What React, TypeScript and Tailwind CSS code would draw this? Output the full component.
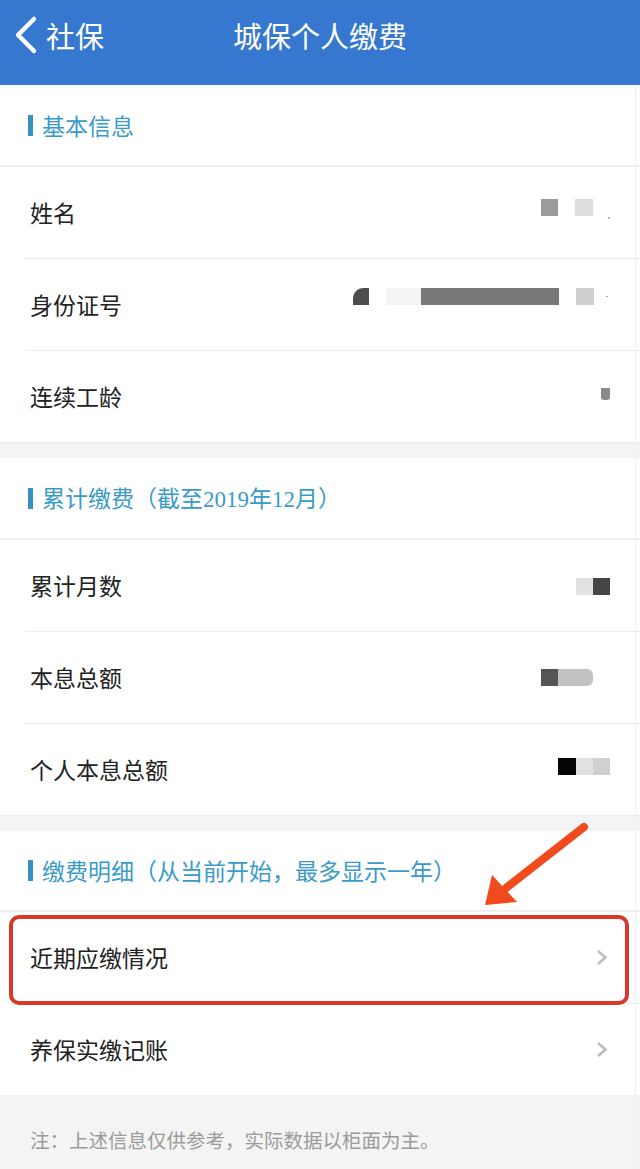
import React from "react";

const cjk = "font-['Noto_Sans_CJK_SC',sans-serif]";

type Block = { w: number; c: string; gap?: number; cls?: string };

const Mask = ({ blocks, className = "" }: { blocks: Block[]; className?: string }) => (
  <div className={`flex items-center ${className}`}>
    {blocks.map((b, i) => (
      <div
        key={i}
        className={`h-[17px] ${b.cls ?? ""}`}
        style={{ width: b.w, background: b.c, marginLeft: b.gap ?? 0 }}
      />
    ))}
  </div>
);

const Divider = ({ inset = true }: { inset?: boolean }) => (
  <div className={`h-px bg-[#ebebeb] ${inset ? "ml-[25px]" : ""}`} />
);

const Row = ({
  label,
  right,
  last = false,
  full = false,
  arrow = false,
  highlight = false,
}: {
  label: string;
  right?: React.ReactNode;
  last?: boolean;
  full?: boolean;
  arrow?: boolean;
  highlight?: boolean;
}) => (
  <div className="relative">
    <div className="flex h-[91px] items-center justify-between pl-[30px] pr-[30px]">
      <span className="text-[23px] leading-none text-[#222]">{label}</span>
      {right}
      {arrow && (
        <svg width="12" height="17" viewBox="0 0 12 17" className="mr-[2px]">
          <polyline points="2,2 9.5,8.5 2,15" fill="none" stroke="#bdbdbd" strokeWidth="2.6" />
        </svg>
      )}
    </div>
    {!last && <Divider inset={!full} />}
    {highlight && (
      <div className="pointer-events-none absolute left-[9px] right-[11px] top-[3px] bottom-[-1px] rounded-[10px] border-[4px] border-[#d8392b]" />
    )}
  </div>
);

const SectionTitle = ({ children, h = 80 }: { children: React.ReactNode; h?: number }) => (
  <div>
    <div className="flex items-center pl-[28px]" style={{ height: h }}>
      <div className="h-[21px] w-[5px] bg-[#3592c1]" />
      <span className="ml-[9px] text-[23px] leading-none text-[#3b9bc8]">{children}</span>
    </div>
    <div className="h-[2px] bg-[#efefef]" />
  </div>
);

const Gap = () => <div className="h-[15px] bg-[#f4f4f4]" />;

const serif = "font-['Liberation_Serif',serif]";

export default function App() {
  return (
    <div className={`relative w-[640px] h-[1169px] overflow-hidden bg-white ${cjk}`}>
      {/* top bar */}
      <div className="grid h-[85px] grid-cols-[1fr_auto_1fr] items-start bg-[#3677d0] pt-[15px] text-white">
        <div className="flex items-center">
          <svg width="30" height="40" viewBox="0 0 30 40" className="ml-[10px]">
            <polyline points="24,4 8,20 24,36" fill="none" stroke="white" strokeWidth="4.5" strokeLinecap="round" strokeLinejoin="round" />
          </svg>
          <span className="ml-[6px] text-[29px] leading-[40px]">社保</span>
        </div>
        <div className="text-[29px] leading-[40px]">城保个人缴费</div>
        <div />
      </div>

      <SectionTitle>基本信息</SectionTitle>
      <Row
        label="姓名"
        right={
          <div className="flex items-start">
            <Mask blocks={[{ w: 17, c: "#9b9b9b" }, { w: 18, c: "#dedede", gap: 17 }]} className="mt-[-8px]" />
            <div className="ml-[15px] mt-[10px] h-[2px] w-[2px] bg-[#bbb]" />
          </div>
        }
      />
      <Row
        label="身份证号"
        right={
          <div className="flex items-center mt-[-17px] mr-[2px]">
            <Mask
              blocks={[
                { w: 16, c: "#4d4d4d", cls: "rounded-tl-[10px]" },
                { w: 35, c: "#f4f4f4", gap: 17 },
                { w: 138, c: "#787878" },
                { w: 18, c: "#cfcfcf", gap: 17 },
              ]}
            />
            <div className="ml-[12px] h-px w-[2px] bg-[#aaa]" />
          </div>
        }
      />
      <Row
        label="连续工龄"
        full
        right={<div className="mt-[-6px] h-[12px] w-[9px] rounded-b-[3px] bg-[#8a8a8a]" />}
      />
      <Gap />

      <SectionTitle>
        累计缴费（截至<span className={serif}>2019</span>年<span className={serif}>12</span>月）
      </SectionTitle>
      <Row
        label="累计月数"
        right={<Mask blocks={[{ w: 17, c: "#e2e2e2" }, { w: 17, c: "#454545" }]} className="mt-[2px]" />}
      />
      <Row
        label="本息总额"
        right={<Mask blocks={[{ w: 17, c: "#555555" }, { w: 35, c: "#c2c2c2", cls: "rounded-r-[6px]" }]} className="mr-[17px]" />}
      />
      <Row
        label="个人本息总额"
        full
        right={
          <Mask blocks={[{ w: 18, c: "#050505" }, { w: 17, c: "#e1e1e1" }, { w: 17, c: "#d0d0d0" }]} className="mt-[-6px]" />
        }
      />
      <Gap />

      <SectionTitle h={79}>缴费明细（从当前开始，最多显示一年）</SectionTitle>
      <Row label="近期应缴情况" arrow highlight />
      <Row label="养保实缴记账" arrow last />

      {/* footer note */}
      <div className="h-[76px] bg-[#f4f4f4] pl-[30px] pt-[34px]">
        <span className="text-[19.5px] leading-none text-[#9b9b9b]">注：上述信息仅供参考，实际数据以柜面为主。</span>
      </div>

      {/* annotation arrow */}
      <svg className="pointer-events-none absolute left-0 top-0" width="640" height="1169">
        <line x1="584" y1="827" x2="506" y2="888" stroke="#f04a1d" strokeWidth="8" strokeLinecap="round" />
        <polygon points="485,905 492,875 517,902" fill="#f04a1d" />
      </svg>

      {/* faint right edge */}
      <div className="absolute right-[4px] top-[85px] bottom-0 w-px bg-[#f0f0f0]" />
    </div>
  );
}
